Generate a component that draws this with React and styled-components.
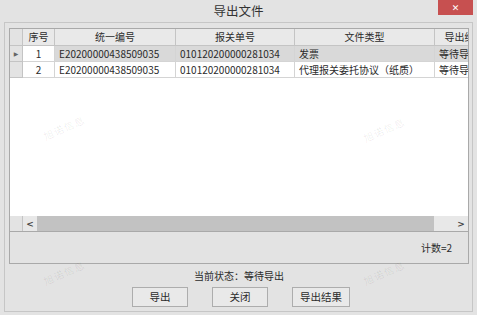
import React from "react";
import styled, { createGlobalStyle } from "styled-components";

const Global = createGlobalStyle`
  html, body { margin: 0; padding: 0; background: #e3e3e3; }
  body { width: 477px; height: 315px; overflow: hidden;
    font-family: "Noto Sans CJK SC", "Noto Sans", sans-serif; color: #2b2b2b; }
  * { box-sizing: border-box; }
`;

const Window = styled.div`
  position: relative;
  width: 477px;
  height: 315px;
  display: flex;
  flex-direction: column;
  background: #e3e3e3;
`;

const TitleBar = styled.div`
  height: 22px;
  display: grid;
  grid-template-columns: 1fr auto 1fr;
  align-items: start;
`;

const Title = styled.div`
  grid-column: 2;
  font-size: 12.5px;
  line-height: 22px;
  color: #333;
`;

const CloseBtn = styled.div`
  grid-column: 3;
  justify-self: end;
  margin-right: 4px;
  width: 35px;
  height: 15px;
  background: #c75050;
  color: #fff;
  font-family: "DejaVu Sans", sans-serif;
  font-size: 9px;
  font-weight: bold;
  display: flex;
  align-items: center;
  justify-content: center;
`;

const Frame = styled.div`
  margin: 0 4px 3px 4px;
  flex: 1;
  border: 1px solid #c6c6c6;
  padding: 5px 3px 4px 4px;
  display: flex;
  flex-direction: column;
`;

const Box = styled.div`
  border: 1px solid #a9a9a9;
  height: 236px;
  display: flex;
  flex-direction: column;
  overflow: hidden;
`;

const GridArea = styled.div`
  flex: 1;
  display: flex;
  flex-direction: column;
  background: #fff;
  border-bottom: 1px solid #a9a9a9;
  overflow: hidden;
`;

const Row = styled.div`
  display: flex;
  height: ${(p) => (p.$header ? 17 : 16)}px;
  flex: none;
`;

const Cell = styled.div`
  flex: none;
  width: ${(p) => p.$w}px;
  height: 100%;
  padding: 0 4px;
  font-size: 10px;
  line-height: 15px;
  white-space: nowrap;
  overflow: hidden;
  text-align: ${(p) => p.$align || "left"};
  background: ${(p) => p.$bg || "#fff"};
  color: #2b2b2b;
  border-right: 1px solid ${(p) => (p.$header ? "#c4c4c4" : "#d4d4d4")};
  border-bottom: 1px solid ${(p) => (p.$header ? "#c4c4c4" : "#d4d4d4")};
`;

const HeadCell = styled(Cell).attrs({ $header: true, $align: "center" })`
  background: #e9e9e9;
  line-height: 16px;
  padding: 0 2px;
`;

const RowHead = styled.div`
  flex: none;
  width: 13px;
  height: 100%;
  background: #e3e3e3;
  border-right: 1px solid #c4c4c4;
  border-bottom: 1px solid #c4c4c4;
  display: flex;
  align-items: center;
  justify-content: center;
  color: #666;
  font-family: "DejaVu Sans", sans-serif;
  font-size: 6px;
`;

const Body = styled.div`
  flex: 1;
  display: flex;
  flex-direction: column;
`;

const HScroll = styled.div`
  height: 15px;
  display: flex;
  flex: none;
  background: #e8e8e8;
`;

const ScrollCorner = styled.div`
  width: 13px;
  background: #e3e3e3;
  border-right: 1px solid #c4c4c4;
`;

const Arrow = styled.div`
  width: 14px;
  display: flex;
  align-items: center;
  justify-content: center;
  color: #444;
  font-family: "DejaVu Sans", sans-serif;
  font-size: 9px;
  font-weight: bold;
`;

const Track = styled.div`
  flex: 1;
  display: flex;
  align-items: stretch;
  padding: 0 20px 0 0;
`;

const Thumb = styled.div`
  flex: 1;
  background: #c2c2c2;
`;

const CountPanel = styled.div`
  height: 31px;
  flex: none;
  display: flex;
  align-items: center;
  justify-content: flex-end;
  padding-right: 16px;
  font-size: 10px;
  background: #e3e3e3;
`;

const Status = styled.div`
  text-align: center;
  font-size: 10px;
  line-height: 14px;
  margin-top: 5px;
`;

const Buttons = styled.div`
  display: flex;
  justify-content: center;
  gap: 24px;
  margin-top: 4px;
  padding-left: 4px;
`;

const Button = styled.div`
  width: ${(p) => p.$w}px;
  height: 20px;
  border: 1px solid #adadad;
  background: #e9e9e9;
  font-size: 10.5px;
  line-height: 18px;
  text-align: center;
`;

const Watermark = styled.div`
  position: absolute;
  left: ${(p) => p.$x}px;
  top: ${(p) => p.$y}px;
  transform: rotate(-24deg);
  font-size: 10px;
  letter-spacing: 1px;
  color: rgba(0, 0, 0, 0.08);
  pointer-events: none;
  white-space: nowrap;
`;

const cols = [
  { key: "no", title: "序号", w: 32, align: "center" },
  { key: "id", title: "统一编号", w: 121 },
  { key: "bill", title: "报关单号", w: 119 },
  { key: "type", title: "文件类型", w: 140 },
  { key: "st", title: "导出结果", w: 60 },
];

const rows = [
  { no: "1", id: "E20200000438509035", bill: "010120200000281034", type: "发票", st: "等待导出" },
  { no: "2", id: "E20200000438509035", bill: "010120200000281034", type: "代理报关委托协议（纸质）", st: "等待导出" },
];

export default function App() {
  return (
    <Window>
      <Global />
      <TitleBar>
        <Title>导出文件</Title>
        <CloseBtn>✕</CloseBtn>
      </TitleBar>
      <Frame>
        <Box>
          <GridArea>
            <Row $header>
              <RowHead />
              {cols.map((c) => (
                <HeadCell key={c.key} $w={c.w}>{c.title}</HeadCell>
              ))}
            </Row>
            <Body>
              {rows.map((r, i) => (
                <Row key={i}>
                  <RowHead>{i === 0 ? "▶" : ""}</RowHead>
                  {cols.map((c) => (
                    <Cell
                      key={c.key}
                      $w={c.w}
                      $align={c.align}
                      $bg={i === 0 && c.key !== "no" ? "#d9d9d9" : "#fff"}
                    >
                      {r[c.key]}
                    </Cell>
                  ))}
                </Row>
              ))}
            </Body>
            <HScroll>
              <ScrollCorner />
              <Arrow>&lt;</Arrow>
              <Track>
                <Thumb />
              </Track>
              <Arrow>&gt;</Arrow>
            </HScroll>
          </GridArea>
          <CountPanel>计数=2</CountPanel>
        </Box>
        <Status>当前状态：等待导出</Status>
        <Buttons>
          <Button $w={56}>导出</Button>
          <Button $w={56}>关闭</Button>
          <Button $w={58}>导出结果</Button>
        </Buttons>
      </Frame>
      <Watermark $x={42} $y={120}>旭诺信息</Watermark>
      <Watermark $x={362} $y={122}>旭诺信息</Watermark>
      <Watermark $x={42} $y={265}>旭诺信息</Watermark>
      <Watermark $x={362} $y={265}>旭诺信息</Watermark>
    </Window>
  );
}
